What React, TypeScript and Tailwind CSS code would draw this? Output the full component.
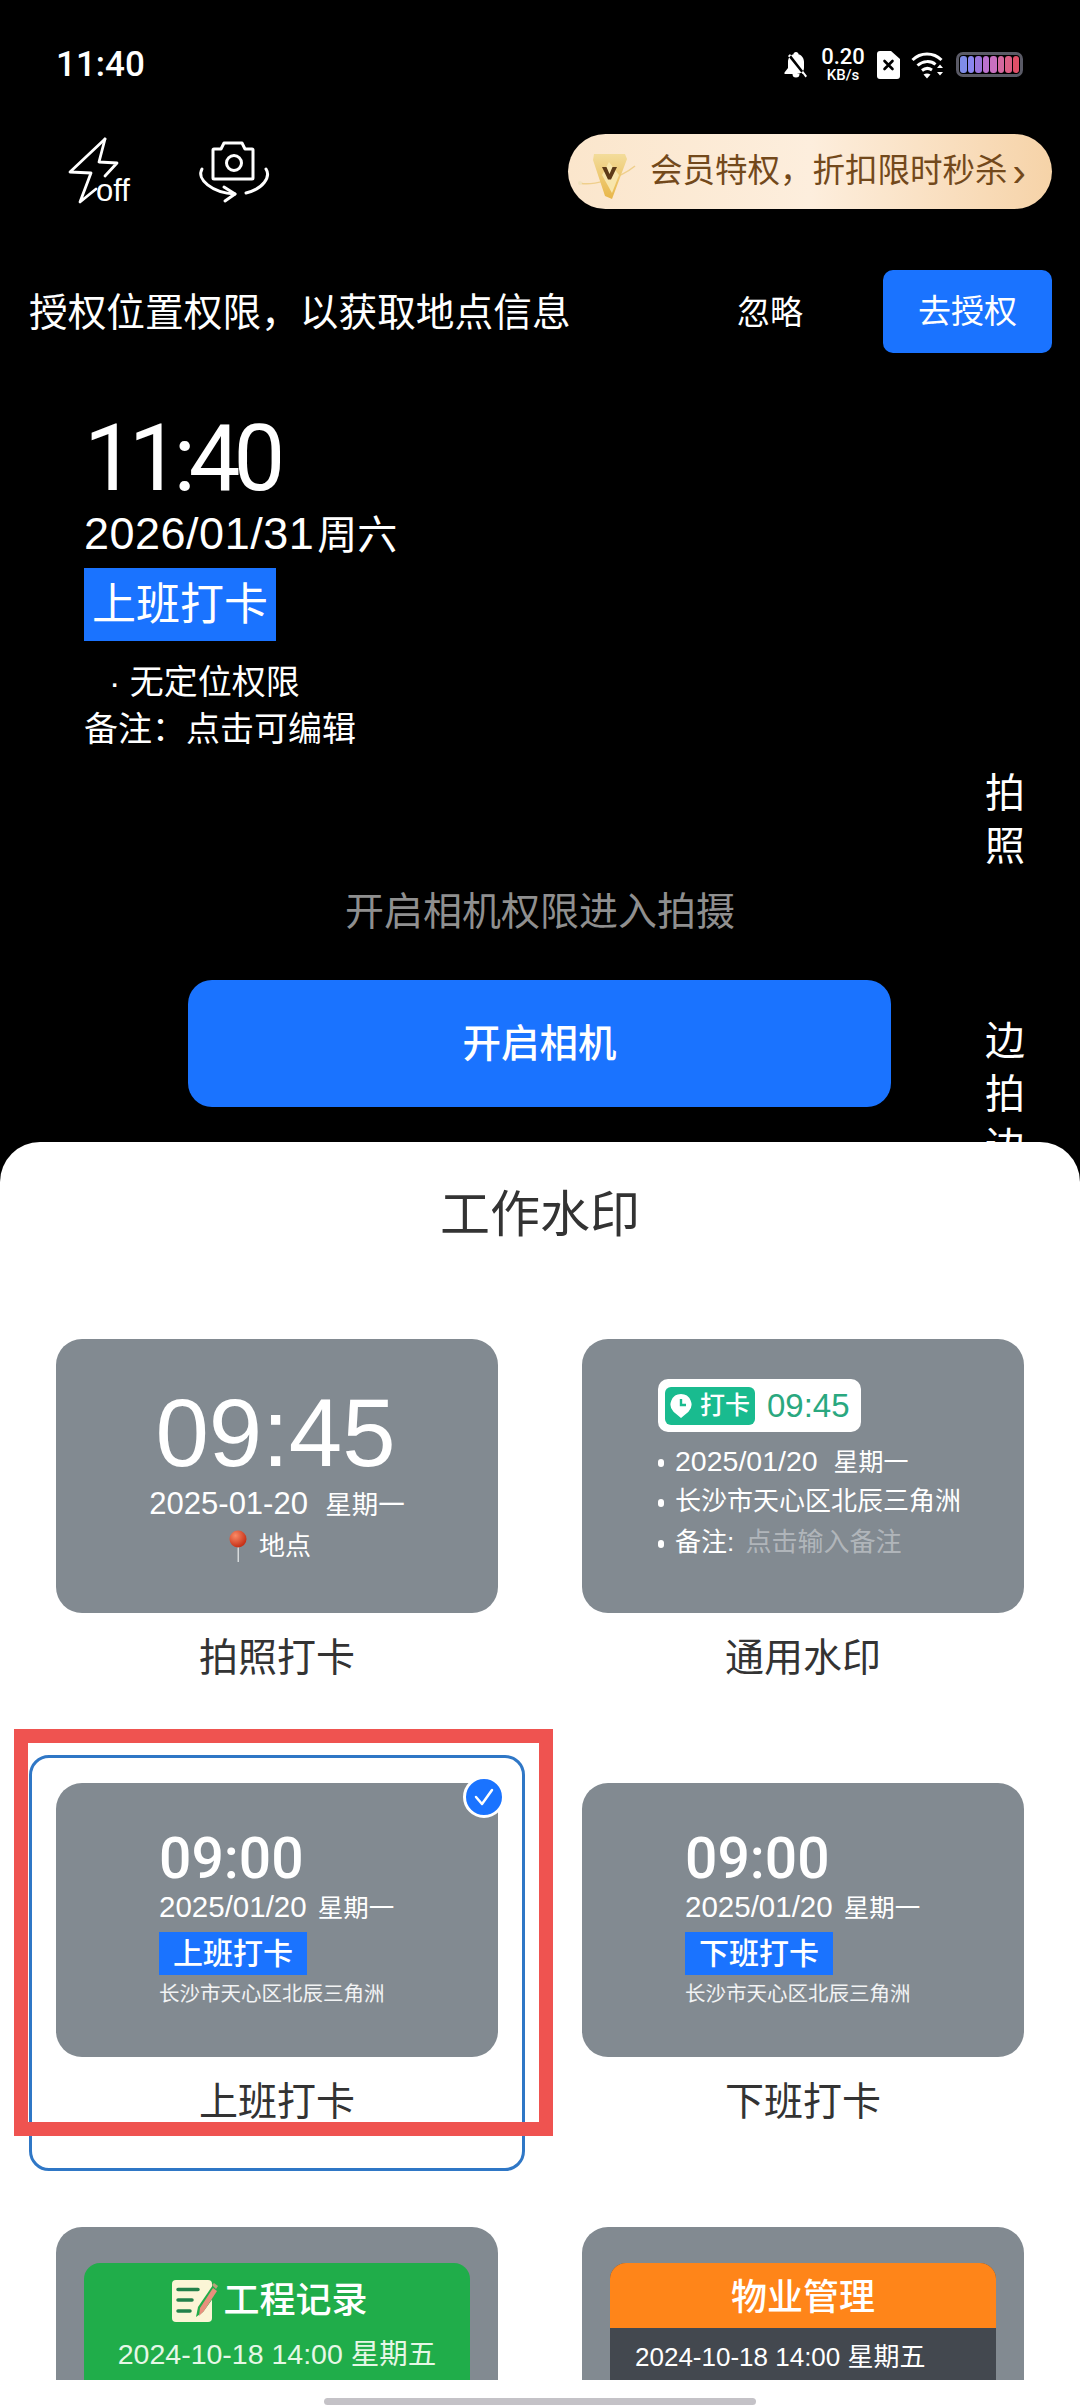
import React from "react";

const blue = "bg-[#1a73ff]";

function BellOff() {
  return (
    <svg width="26" height="28" viewBox="0 0 26 28" fill="white">
      <path d="M13 1c-1.500 0-2.500 1-2.500 2.200C6.500 4.400 5 7.800 5 11v6l-3.500 4.500V23h18L5 5l2-2 17 22-1.500 1.500L20 23h-3.500a3.500 3.500 0 0 1-7 0H13c2 0 8-1 8-6v-6c0-3.200-1.500-6.600-5.500-7.800C15.500 2 14.500 1 13 1z" />
    </svg>
  );
}

function SimX() {
  return (
    <svg width="23" height="28" viewBox="0 0 23 28">
      <path d="M3 0h11l9 8v17a3 3 0 0 1-3 3H3a3 3 0 0 1-3-3V3a3 3 0 0 1 3-3z" fill="white" />
      <path d="M7.500 10l8 8M15.500 10l-8 8" stroke="black" strokeWidth="2.600" strokeLinecap="round" />
    </svg>
  );
}

function Wifi() {
  return (
    <svg width="34" height="28" viewBox="0 0 34 28" fill="none" stroke="white" strokeWidth="3">
      <path d="M1.500 9C9.500 1 22.500 1 30.500 9" />
      <path d="M6.500 14.500c5.500-5 13.500-5 18 -1" />
      <path d="M11 19.500c3-2.500 7-2.500 10-.5" />
      <path d="M12.500 23.500l3.500 4 3.500-4c-2-1.500-5-1.500-7 0z" fill="white" strokeWidth="0" />
      <path d="M26 17l3-3.500 3 3.500zM26 21l3 3.500 3-3.500z" fill="white" strokeWidth="0" />
    </svg>
  );
}

const batteryColors = ["#7f8ce8", "#8a86f0", "#9a76dc", "#bb72cf", "#c870c0", "#d4689f", "#dc5f86", "#e24f68"];

function Battery() {
  return (
    <div className="flex h-[25px] w-[67px] gap-[1px] rounded-[7px] border-[3px] border-[#5a5a66] p-[1px]">
      {batteryColors.map((c) => (
        <div key={c} className="flex-1 rounded-[3px]" style={{ background: c }} />
      ))}
    </div>
  );
}

function FlashOff() {
  return (
    <svg width="70" height="70" viewBox="0 0 70 70" fill="none" stroke="white" strokeWidth="2.800" strokeLinejoin="round" strokeLinecap="round">
      <path d="M37 2L2 35l21 1-11 29 16-13" />
      <path d="M37 2l-6 23 18 1-12 13" />
      <text x="28" y="64" fill="white" stroke="none" fontSize="31" fontFamily="Liberation Sans">off</text>
    </svg>
  );
}

function CameraFlip() {
  return (
    <svg width="76" height="66" viewBox="0 0 76 66" fill="none" stroke="white" strokeWidth="3" strokeLinecap="round" strokeLinejoin="round">
      <path d="M18 10h7l3-6h18l3 6h7a1 1 0 0 1 1 1v28a1 1 0 0 1-1 1H18a1 1 0 0 1-1-1V11a1 1 0 0 1 1-1z" />
      <circle cx="38" cy="24" r="7.500" />
      <path d="M6 30c-6 10 10 24 33 25" />
      <path d="M28 48l11 7-10 7" />
      <path d="M70 30c5 8-3 20-20 24" />
    </svg>
  );
}

function VipBadge() {
  return (
    <svg width="62" height="56" viewBox="0 0 62 56">
      <defs>
        <linearGradient id="gold" x1="0" y1="0" x2="0" y2="1">
          <stop offset="0" stopColor="#f3dc9b" />
          <stop offset="1" stopColor="#e8b648" />
        </linearGradient>
      </defs>
      <path d="M6 39c10 3 38-3 55-17" fill="none" stroke="#efcf8c" strokeWidth="1.500" />
      <circle cx="6" cy="39" r="2" fill="#f1e3c0" />
      <path d="M20 10h31l2 5-15 40-7-3-12-36z" fill="url(#gold)" />
      <path d="M35 18l10 13-7 18-10-18z" fill="#f8e6ac" />
      <path d="M28 23h4.500l3 7 3-7H43l-6 12.500h-3z" fill="#5d3b18" />
    </svg>
  );
}

function ClockPin() {
  return (
    <svg width="22" height="24" viewBox="0 0 22 24">
      <path d="M11 0a10.500 10.500 0 0 1 7.500 17.800L11 24l-7.500-6.200A10.500 10.500 0 0 1 11 0z" fill="white" />
      <path d="M11 5v6h5" fill="none" stroke="#19bb8f" strokeWidth="2.400" />
    </svg>
  );
}

function RedPin() {
  return (
    <svg width="18" height="32" viewBox="0 0 18 32">
      <defs>
        <radialGradient id="pin" cx="0.350" cy="0.300" r="0.700">
          <stop offset="0" stopColor="#f98a66" />
          <stop offset="1" stopColor="#c62f16" />
        </radialGradient>
      </defs>
      <rect x="8.500" y="14" width="1.500" height="18" fill="#d6dadc" />
      <circle cx="9" cy="9" r="8.500" fill="url(#pin)" />
    </svg>
  );
}

function NoteIcon() {
  return (
    <svg width="46" height="43" viewBox="0 0 46 43">
      <rect x="0" y="0" width="40" height="42" rx="4" fill="#fbf5d6" />
      <path d="M6 9.500h20M6 20h14M6 31h12" stroke="#22804a" strokeWidth="3.500" strokeLinecap="round" />
      <path d="M24 37l2-10L41 5l6 5-16 22z" fill="#20ad4a" />
      <path d="M27 36l1-8L41 8l4 3-13 20z" fill="#e8907d" />
      <path d="M40 5l2-2 4 3-2 3z" fill="#b9a27a" />
    </svg>
  );
}

function Check() {
  return (
    <svg width="20" height="18" viewBox="0 0 20 18" fill="none" stroke="white" strokeWidth="2.500" strokeLinecap="round" strokeLinejoin="round">
      <path d="M2 9l6 7L18 2" />
    </svg>
  );
}

function Dot() {
  return <span className="mr-[11px] inline-block h-[8px] w-[6px] rounded-full bg-white align-middle" />;
}

function Thumb({ children }: { children: React.ReactNode }) {
  return <div className="h-[274px] overflow-hidden rounded-[26px] bg-[#828a91] text-white">{children}</div>;
}

function ShiftThumb({ tag }: { tag: string }) {
  return (
    <div className="flex flex-col items-start pl-[103px] pt-[45px]">
      <div className="text-[57px] font-medium leading-[62px] font-['Roboto']">09:00</div>
      <div className="text-[29.500px] leading-[34px]">
        2025/01/20 <span className="ml-[3px] text-[25.500px]">星期一</span>
      </div>
      <div className={`${blue} mt-[7px] flex h-[43px] w-[148px] items-center justify-center text-[30px] font-medium leading-none`}>{tag}</div>
      <div className="mt-[6px] text-[20.500px] leading-[26px] text-white/90">长沙市天心区北辰三角洲</div>
    </div>
  );
}

function Cell({ label, children }: { label: string; children: React.ReactNode }) {
  return (
    <div className="h-[444px]">
      <Thumb>{children}</Thumb>
      <div className="mt-[21px] text-center text-[39px] leading-[48px] text-[#333333]">{label}</div>
    </div>
  );
}

export default function App() {
  return (
    <div className="relative flex h-[2408px] w-[1080px] flex-col overflow-hidden bg-black font-['Liberation_Sans','Noto_Sans_CJK_SC',sans-serif] text-white">
      {/* Camera area */}
      <div className="relative h-[1142px] shrink-0 overflow-hidden">
        <div className="flex h-[134px] items-start justify-between pl-[56px] pr-[57px] pt-[47px]">
          <div className="text-[35px] font-medium leading-[36px] font-['Roboto']">11:40</div>
          <div className="-mt-[3px] flex items-center gap-[11px] pt-[2px]">
            <BellOff />
            <div className="flex w-[46px] flex-col items-center font-['Roboto'] font-medium">
              <span className="text-[22px] leading-[22px]">0.20</span>
              <span className="text-[15px] leading-[15px]">KB/s</span>
            </div>
            <SimX />
            <Wifi />
            <Battery />
          </div>
        </div>

        <div className="flex h-[75px] items-center justify-between pl-[68px] pr-[28px]">
          <div className="flex items-center gap-[58px]">
            <FlashOff />
            <CameraFlip />
          </div>
          <div className="flex h-[75px] w-[484px] items-center rounded-full bg-gradient-to-r from-[#fbe6cc] via-[#fdeedd] to-[#f6d3a8] pl-[6px] text-[32.500px] text-[#73491b]">
            <VipBadge />
            <span className="ml-[14px]">会员特权，折扣限时秒杀</span>
            <span className="ml-[5px] text-[40px] leading-none">›</span>
          </div>
        </div>

        <div className="mt-[61px] flex h-[83px] items-center pl-[29px] pr-[28px]">
          <div className="flex-1 pt-[3px] text-[38.700px]">授权位置权限，以获取地点信息</div>
          <div className="mr-[80px] pt-[2px] text-[33px]">忽略</div>
          <div className={`${blue} flex h-[83px] w-[169px] items-center justify-center rounded-[10px] text-[33px]`}>去授权</div>
        </div>

        <div className="flex flex-col items-start pl-[84px] pt-[63px]">
          <div className="text-[92px] leading-[86px] tracking-[-7px] font-['Roboto']">11:40</div>
          <div className="mt-[9px] text-[45px] leading-[46px] tracking-[0.500px]">
            2026/01/31<span className="ml-[3px] text-[40px] tracking-normal">周六</span>
          </div>
          <div className={`${blue} mt-[10px] flex h-[73px] w-[192px] items-center justify-center text-[44px] leading-none`}>上班打卡</div>
          <div className="mt-[18px] pl-[25px] text-[34px] leading-[46px]">· 无定位权限</div>
          <div className="mt-[1px] text-[34px] leading-[46px]">备注：点击可编辑</div>
          <div className="mt-[135px] w-[912px] text-center text-[39px] leading-[50px] text-[#8f8f8f]">开启相机权限进入拍摄</div>
          <div className={`${blue} ml-[104px] mt-[43px] flex h-[127px] w-[703px] items-center justify-center rounded-[24px] text-[38.500px] font-medium`}>开启相机</div>
        </div>

        {/* Mode tabs sit over the preview, on the right edge */}
        <div className="absolute left-[985px] top-[767px] flex w-[42px] flex-col gap-[142px] text-[40px] leading-[53px]">
          <div>拍照</div>
          <div>边拍边</div>
        </div>
      </div>

      {/* Bottom sheet */}
      <div className="flex h-[1266px] shrink-0 flex-col rounded-t-[40px] bg-white">
        <div className="pt-[45px] text-center text-[50px] leading-[56px] text-[#333333]">工作水印</div>
        <div className="mt-[96px] h-[1041px] overflow-hidden px-[56px]">
          <div className="relative grid grid-cols-[442px_442px] gap-x-[84px]">
            <Cell label="拍照打卡">
              <div className="flex flex-col items-center pt-[49px]">
                <div className="-ml-[3px] text-[96px] leading-[90px]">09:45</div>
                <div className="mt-[8px] text-[31px] leading-[36px]">
                  2025-01-20&nbsp;&nbsp;<span className="text-[26.500px]">星期一</span>
                </div>
                <div className="mt-[5px] flex items-center gap-[12px] pr-[14px] text-[26px] leading-[36px]">
                  <RedPin />
                  地点
                </div>
              </div>
            </Cell>
            <Cell label="通用水印">
              <div className="pl-[76px] pt-[40px]">
                <div className="flex h-[53px] w-[203px] items-center rounded-[10px] bg-white pl-[7px]">
                  <div className="flex h-[38px] w-[90px] items-center gap-[8px] rounded-[6px] bg-[#19bb8f] pl-[5px] text-[25px] font-medium">
                    <ClockPin />
                    打卡
                  </div>
                  <div className="ml-[12px] text-[33px] text-[#2aa87f]">09:45</div>
                </div>
                <div className="mt-[9px] text-[28.500px] leading-[40px]">
                  <Dot />
                  2025/01/20&nbsp;&nbsp;<span className="text-[25px]">星期一</span>
                </div>
                <div className="mt-[-1px] text-[26px] leading-[40px]">
                  <Dot />
                  长沙市天心区北辰三角洲
                </div>
                <div className="mt-[1px] text-[26px] leading-[40px]">
                  <Dot />
                  备注: <span className="ml-[4px] text-white/40">点击输入备注</span>
                </div>
              </div>
            </Cell>
            <Cell label="上班打卡">
              <ShiftThumb tag="上班打卡" />
            </Cell>
            <Cell label="下班打卡">
              <ShiftThumb tag="下班打卡" />
            </Cell>
            <Cell label="工程记录">
              <div className="mx-[28px] mt-[36px] h-[240px] overflow-hidden rounded-t-[16px] bg-[#20ad4a]">
                <div className="flex items-center justify-center gap-[5px] pr-[14px] pt-[16px]">
                  <NoteIcon />
                  <span className="text-[36px] font-medium leading-[44px]">工程记录</span>
                </div>
                <div className="mt-[13px] text-center text-[28.500px] leading-[36px] text-[#e6f7e6]">2024-10-18 14:00 星期五</div>
                <div className="mt-[11px] h-[40px] bg-[#1f4f3a]" />
              </div>
            </Cell>
            <Cell label="物业管理">
              <div className="mx-[28px] mt-[36px] h-[240px] overflow-hidden rounded-t-[16px] bg-[#43484f]">
                <div className="flex h-[65px] items-center justify-center bg-[#ff8519] pt-[4px] text-[36px] font-medium">物业管理</div>
                <div className="pl-[25px] pt-[11px] text-[26px] leading-[36px]">2024-10-18 14:00 星期五</div>
              </div>
            </Cell>

            {/* Selected frame around the 上班打卡 cell */}
            <div className="absolute left-[-27px] top-[416px] h-[416px] w-[496px] rounded-[20px] border-[3px] border-[#2f77c6]" />
            <div className="absolute left-[407px] top-[437px] flex h-[42px] w-[42px] items-center justify-center rounded-full border-[3px] border-white bg-[#1a73ff]">
              <Check />
            </div>
          </div>
        </div>
        <div className="flex flex-1 items-start justify-center pt-[18px]">
          <div className="h-[7px] w-[432px] rounded-full bg-[#c4c2c7]" />
        </div>
      </div>

      {/* Annotation rectangle drawn over the screenshot */}
      <div className="absolute left-[14px] top-[1729px] h-[407px] w-[539px] border-[14px] border-[#ef5350]" />
    </div>
  );
}
